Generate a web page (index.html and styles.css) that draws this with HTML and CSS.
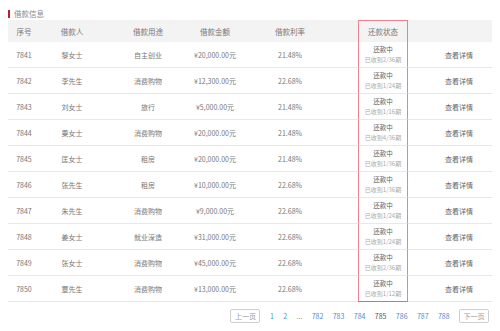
FILE: index.html
```html
<!DOCTYPE html>
<html lang="zh">
<head>
<meta charset="utf-8">
<link rel="stylesheet" href="styles.css">
</head>
<body>
<div class="page">
  <div class="title">借款信息</div>
  <div class="table">
    <div class="row head">
      <div class="c">序号</div><div class="c">借款人</div><div class="c">借款用途</div><div class="c">借款金额</div><div class="c">借款利率</div><div class="c"></div><div class="c st">还款状态</div><div class="c op"></div>
    </div>
    <div class="row"><div class="c">7841</div><div class="c">黎女士</div><div class="c">自主创业</div><div class="c">¥20,000.00元</div><div class="c">21.48%</div><div class="c"></div><div class="c st"><span>还款中</span><small>已收到2/36期</small></div><div class="c op">查看详情</div></div>
    <div class="row"><div class="c">7842</div><div class="c">李先生</div><div class="c">消费购物</div><div class="c">¥12,300.00元</div><div class="c">22.68%</div><div class="c"></div><div class="c st"><span>还款中</span><small>已收到1/24期</small></div><div class="c op">查看详情</div></div>
    <div class="row"><div class="c">7843</div><div class="c">刘女士</div><div class="c">旅行</div><div class="c">¥5,000.00元</div><div class="c">21.48%</div><div class="c"></div><div class="c st"><span>还款中</span><small>已收到1/16期</small></div><div class="c op">查看详情</div></div>
    <div class="row"><div class="c">7844</div><div class="c">粟女士</div><div class="c">消费购物</div><div class="c">¥20,000.00元</div><div class="c">21.48%</div><div class="c"></div><div class="c st"><span>还款中</span><small>已收到4/36期</small></div><div class="c op">查看详情</div></div>
    <div class="row"><div class="c">7845</div><div class="c">匡女士</div><div class="c">租房</div><div class="c">¥20,000.00元</div><div class="c">21.48%</div><div class="c"></div><div class="c st"><span>还款中</span><small>已收到1/36期</small></div><div class="c op">查看详情</div></div>
    <div class="row"><div class="c">7846</div><div class="c">张先生</div><div class="c">租房</div><div class="c">¥10,000.00元</div><div class="c">22.68%</div><div class="c"></div><div class="c st"><span>还款中</span><small>已收到1/36期</small></div><div class="c op">查看详情</div></div>
    <div class="row"><div class="c">7847</div><div class="c">朱先生</div><div class="c">消费购物</div><div class="c">¥9,000.00元</div><div class="c">22.68%</div><div class="c"></div><div class="c st"><span>还款中</span><small>已收到1/24期</small></div><div class="c op">查看详情</div></div>
    <div class="row"><div class="c">7848</div><div class="c">姜女士</div><div class="c">就业深造</div><div class="c">¥31,000.00元</div><div class="c">22.68%</div><div class="c"></div><div class="c st"><span>还款中</span><small>已收到1/24期</small></div><div class="c op">查看详情</div></div>
    <div class="row"><div class="c">7849</div><div class="c">张女士</div><div class="c">消费购物</div><div class="c">¥45,000.00元</div><div class="c">22.68%</div><div class="c"></div><div class="c st"><span>还款中</span><small>已收到2/36期</small></div><div class="c op">查看详情</div></div>
    <div class="row last"><div class="c">7850</div><div class="c">覃先生</div><div class="c">消费购物</div><div class="c">¥13,000.00元</div><div class="c">22.68%</div><div class="c"></div><div class="c st"><span>还款中</span><small>已收到1/12期</small></div><div class="c op">查看详情</div></div>
  </div>
  <div class="pager">
    <span class="btn">上一页</span>
    <a class="pg">1</a><a class="pg">2</a><span class="pg dots">...</span>
    <a class="pg">782</a><a class="pg">783</a><a class="pg">784</a><span class="pg cur">785</span><a class="pg">786</a><a class="pg">787</a><a class="pg">788</a>
    <span class="btn">下一页</span>
  </div>
</div>
</body>
</html>
```

FILE: styles.css
```css
* { box-sizing: border-box; }
html, body { margin: 0; padding: 0; background: #fff; }
body {
  font-family: "Noto Sans CJK SC", "Noto Sans", sans-serif;
  color: #666;
  width: 500px;
  height: 331px;
  overflow: hidden;
}
.page { padding: 7px 8px 0; }
.title {
  display: flex;
  align-items: center;
  gap: 4px;
  height: 13px;
  font-size: 7.5px;
  color: #888;
}
.title::before {
  content: "";
  width: 2px;
  height: 8px;
  background: #c8182e;
}
.table { width: 484px; }
.row {
  display: grid;
  grid-template-columns: 32px 64px 88px 46px 104px 16px 50px 84px;
  height: 26px;
}
.row .c {
  display: flex;
  flex-direction: column;
  align-items: center;
  justify-content: center;
  font-size: 7px;
  color: #777;
  border-bottom: 1px solid #e8e8e8;
  white-space: nowrap;
}
.row.head { height: 22px; background: #f3f3f3; }
.row.head .c { font-size: 7.5px; border-bottom: none; color: #777; }
.row .st {
  border-left: 1px solid #e58390;
  border-right: 1px solid #e58390;
}
.row.head .st { border-top: 1px solid #e58390; }
.row.last .st { border-bottom: 1px solid #e06a78; }
.st span, .st small {
  display: block;
  height: 9.5px;
  line-height: 9.5px;
}
.st span { color: #666; font-size: 6.5px; }
.st small { color: #aaa; font-size: 6px; }
.row .op { padding-left: 18px; color: #666; }
.pager {
  display: flex;
  justify-content: flex-end;
  align-items: center;
  margin-top: 7px;
  padding-right: 3px;
  height: 14px;
  font-size: 7px;
}
.btn {
  display: flex;
  align-items: center;
  justify-content: center;
  width: 30px;
  height: 14px;
  border: 1px solid #cfcfcf;
  border-radius: 2px;
  color: #999;
}
.pg {
  color: #4a8fd0;
  margin-left: 9.4px;
}
.pg.dots { color: #888; }
.pg.cur { color: #555; }
.pg + .btn { margin-left: 9.4px; }
```
